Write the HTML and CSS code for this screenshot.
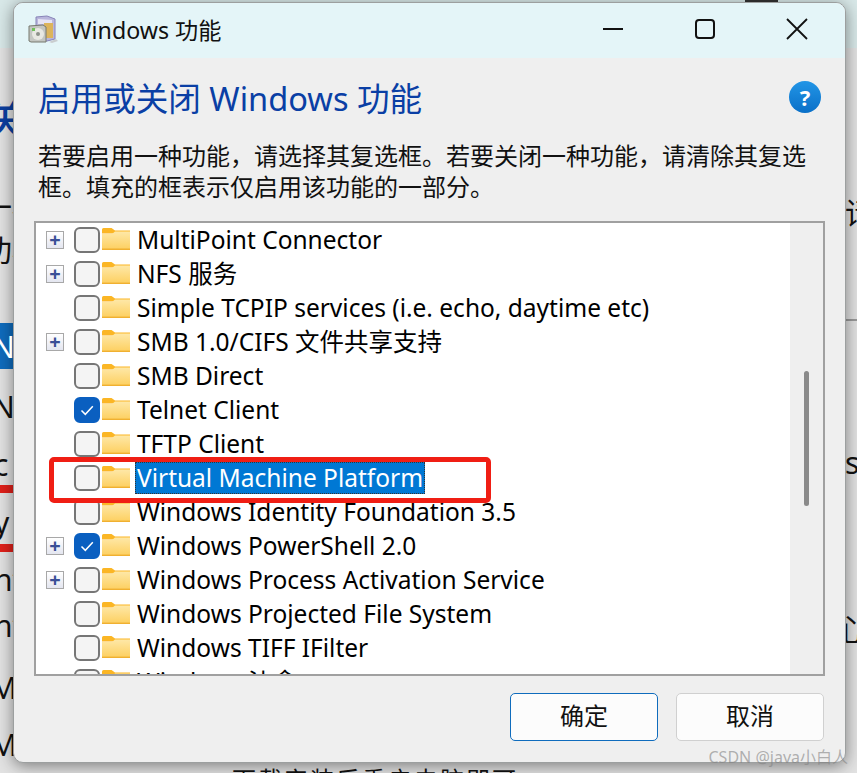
FILE: index.html
```html
<!DOCTYPE html>
<html lang="zh-CN">
<head>
  <meta charset="UTF-8">
  <title>Windows 功能</title>
  <link rel="stylesheet" href="styles.css">
</head>
<body>
  <svg class="defs" width="0" height="0">
    <linearGradient id="folderfill" x1="0" y1="0" x2="0" y2="1">
      <stop offset="0" stop-color="#fee8a8"/>
      <stop offset="1" stop-color="#fdcf5e"/>
    </linearGradient>
    <symbol id="folder" viewBox="0 0 28 22">
      <path d="M0 1.5A1.5 1.5 0 0 1 1.5 0h8l3.500 2.500h15v3H0z" fill="#fbb625"/>
      <path d="M0 6h10l3-2.500h15V21a1 1 0 0 1-1 1H1a1 1 0 0 1-1-1z" fill="url(#folderfill)"/>
      <path d="M0 21.300h28" stroke="#f0b030" stroke-width="1.400"/>
    </symbol>
    <symbol id="tick" viewBox="0 0 26 26">
      <path d="M7.500 13.500l3.800 3.800 7.500-8" fill="none" stroke="#fff" stroke-width="1.500"/>
    </symbol>
  </svg>

  <!-- page behind the dialog -->
  <div class="behind">
    <span class="frag frag-guan">关</span>
    <span class="frag frag-a">一桥</span>
    <span class="frag frag-b">功析</span>
    <span class="frag frag-n">N</span>
    <span class="frag frag-n2">N</span>
    <span class="frag frag-c">c</span>
    <span class="frag frag-y">y</span>
    <span class="frag frag-i1">nt</span>
    <span class="frag frag-i2">nt</span>
    <span class="frag frag-m1">Mi</span>
    <span class="frag frag-m2">Mi</span>
    <span class="frag frag-r1">请</span>
    <span class="frag frag-r2">s</span>
    <span class="frag frag-r3">心</span>
    <span class="frag frag-bottom">下载安装后重启电脑即可</span>
    <i class="redline redline-1"></i>
    <i class="redline redline-2"></i>
    <i class="hilite"></i>
    <i class="rule"></i>
    <i class="topblock"></i>
  </div>

  <div class="window">
    <div class="titlebar">
      <svg class="appicon" width="30" height="30" viewBox="0 0 30 30">
        <path d="M8 3l11-1 8 3v20l-8 2H8z" fill="#b9b6dc" stroke="#8884b8"/>
        <path d="M10 5l14 1v4H10z" fill="#e6e4f4"/>
        <path d="M16 9h9v15h-9z" fill="#dcb45c"/>
        <path d="M1 12l14-1 3 2v15H3l-2-1z" fill="#c4c6c2" stroke="#77796f"/>
        <circle cx="10" cy="20" r="6" fill="#e8e8e2"/>
        <circle cx="10" cy="20" r="2" fill="#8d918a"/>
        <path d="M4 14h3v3H4z" fill="#6fc25a"/>
        <path d="M21 28l7-3 2 2-6 2z" fill="#c9cdcf"/>
      </svg>
      <span class="title">Windows 功能</span>
      <div class="winbtns">
        <svg width="22" height="22" viewBox="0 0 22 22"><path d="M1 11h20" stroke="#111" stroke-width="2"/></svg>
        <svg width="22" height="22" viewBox="0 0 22 22"><rect x="2" y="2" width="18" height="18" rx="3" fill="none" stroke="#111" stroke-width="2"/></svg>
        <svg width="22" height="22" viewBox="0 0 22 22"><path d="M1 1l20 20M21 1L1 21" stroke="#111" stroke-width="1.800"/></svg>
      </div>
    </div>

    <div class="content">
      <div class="heading">
        <h1>启用或关闭 Windows 功能</h1>
        <span class="help">?</span>
      </div>
      <p class="intro">若要启用一种功能，请选择其复选框。若要关闭一种功能，请清除其复选框。填充的框表示仅启用该功能的一部分。</p>

      <div class="listbox">
        <div class="rows">
          <div class="row"><span class="expander">+</span><span class="check"></span><svg class="folder"><use href="#folder"/></svg><span class="label">MultiPoint Connector</span></div>
          <div class="row"><span class="expander">+</span><span class="check"></span><svg class="folder"><use href="#folder"/></svg><span class="label">NFS 服务</span></div>
          <div class="row"><span class="expander blank"></span><span class="check"></span><svg class="folder"><use href="#folder"/></svg><span class="label">Simple TCPIP services (i.e. echo, daytime etc)</span></div>
          <div class="row"><span class="expander">+</span><span class="check"></span><svg class="folder"><use href="#folder"/></svg><span class="label">SMB 1.0/CIFS 文件共享支持</span></div>
          <div class="row"><span class="expander blank"></span><span class="check"></span><svg class="folder"><use href="#folder"/></svg><span class="label">SMB Direct</span></div>
          <div class="row"><span class="expander blank"></span><span class="check on"><svg><use href="#tick"/></svg></span><svg class="folder"><use href="#folder"/></svg><span class="label">Telnet Client</span></div>
          <div class="row"><span class="expander blank"></span><span class="check"></span><svg class="folder"><use href="#folder"/></svg><span class="label">TFTP Client</span></div>
          <div class="row"><span class="expander blank"></span><span class="check"></span><svg class="folder"><use href="#folder"/></svg><span class="label selected">Virtual Machine Platform</span></div>
          <div class="row"><span class="expander blank"></span><span class="check"></span><svg class="folder"><use href="#folder"/></svg><span class="label">Windows Identity Foundation 3.5</span></div>
          <div class="row"><span class="expander">+</span><span class="check on"><svg><use href="#tick"/></svg></span><svg class="folder"><use href="#folder"/></svg><span class="label">Windows PowerShell 2.0</span></div>
          <div class="row"><span class="expander">+</span><span class="check"></span><svg class="folder"><use href="#folder"/></svg><span class="label">Windows Process Activation Service</span></div>
          <div class="row"><span class="expander blank"></span><span class="check"></span><svg class="folder"><use href="#folder"/></svg><span class="label">Windows Projected File System</span></div>
          <div class="row"><span class="expander blank"></span><span class="check"></span><svg class="folder"><use href="#folder"/></svg><span class="label">Windows TIFF IFilter</span></div>
          <div class="row"><span class="expander blank"></span><span class="check"></span><svg class="folder"><use href="#folder"/></svg><span class="label">Windows 沙盒</span></div>
        </div>
        <div class="scrollbar"><div class="thumb"></div></div>
      </div>

      <div class="buttons">
        <button class="btn primary">确定</button>
        <button class="btn">取消</button>
      </div>
    </div>

    <div class="marker"></div>
  </div>

  <div class="watermark">CSDN @java小白人</div>
</body>
</html>
```

FILE: styles.css
```css
html, body {
  margin: 0;
  padding: 0;
}
body {
  position: relative;
  width: 857px;
  height: 773px;
  overflow: hidden;
  background: #d6d6d6;
  font-family: "Noto Sans", "Noto Sans CJK SC", sans-serif;
}
.defs {
  position: absolute;
}

/* page behind the dialog */
.behind {
  position: absolute;
  inset: 0;
  background: linear-gradient(#d8e8e8 0, #d8e8e8 48px, #e2e2e2 48px, #e2e2e2 100%);
}
.frag {
  position: absolute;
  font-size: 30px;
  line-height: 34px;
  color: #111;
}
.frag-guan { left: -18px; top: 94px; font-size: 46px; line-height: 46px; color: #0b3fa0; }
.frag-a { left: -18px; top: 190px; }
.frag-b { left: -18px; top: 233px; }
.frag-n { left: -8px; top: 330px; color: #fff; z-index: 1; }
.frag-n2 { left: -8px; top: 390px; }
.frag-c { left: -6px; top: 448px; }
.frag-y { left: -6px; top: 506px; }
.frag-i1 { left: -6px; top: 563px; }
.frag-i2 { left: -6px; top: 609px; }
.frag-m1 { left: -10px; top: 671px; }
.frag-m2 { left: -10px; top: 728px; }
.frag-r1 { left: 845px; top: 196px; }
.frag-r2 { left: 845px; top: 446px; }
.frag-r3 { left: 836px; top: 612px; }
.frag-bottom { left: 232px; top: 763px; letter-spacing: 2px; font-size: 24px; }
.redline {
  position: absolute;
  left: 0;
  width: 14px;
  height: 8px;
  background: #e0201a;
}
.redline-1 { top: 485px; }
.redline-2 { top: 544px; }
.hilite {
  position: absolute;
  left: 0;
  top: 323px;
  width: 14px;
  height: 46px;
  background: #0f6cbd;
}
.rule {
  position: absolute;
  left: 846px;
  top: 319px;
  width: 11px;
  height: 2px;
  background: #9a9a9a;
}
.topblock {
  position: absolute;
  left: 745px;
  top: 0;
  width: 33px;
  height: 3px;
  background: #333;
}

/* dialog */
.window {
  position: absolute;
  left: 13px;
  top: 2px;
  width: 833px;
  height: 761px;
  box-sizing: border-box;
  border: 1px solid #9c9f9f;
  border-radius: 10px;
  background: #efefef;
  overflow: hidden;
  box-shadow: 0 3px 16px rgba(0, 0, 0, 0.45);
  display: flex;
  flex-direction: column;
}
.titlebar {
  height: 55px;
  box-sizing: border-box;
  flex: none;
  display: flex;
  align-items: center;
  background: #e4f5f8;
  padding: 0 0 3px 14px;
}
.appicon {
  margin-right: 12px;
}
.title {
  font-size: 23.2px;
  color: #111;
}
.winbtns {
  margin-left: auto;
  display: flex;
  gap: 70px;
  padding-right: 37px;
}
.content {
  flex: 1;
  display: flex;
  flex-direction: column;
  padding: 0 20px;
}
.heading {
  display: flex;
  justify-content: space-between;
  align-items: center;
  padding: 17px 4px 0 4px;
  height: 44px;
}
h1 {
  margin: 0;
  font-size: 32.6px;
  font-weight: 400;
  color: #0a3fa5;
  white-space: nowrap;
}
.help {
  width: 32px;
  height: 32px;
  border-radius: 50%;
  background: linear-gradient(#2295e6, #0a70c8);
  color: #fff;
  font-size: 22px;
  font-weight: 700;
  text-align: center;
  line-height: 32px;
}
.intro {
  margin: 21px 0 0 4px;
  width: 775px;
  font-size: 24px;
  line-height: 31px;
  color: #111;
}
.listbox {
  margin-top: 19px;
  width: 791px;
  height: 455px;
  box-sizing: border-box;
  border: 2px solid #a0a0a0;
  background: #fff;
  display: flex;
  overflow: hidden;
}
.rows {
  flex: 1;
}
.row {
  height: 34px;
  display: flex;
  align-items: center;
  padding-left: 10px;
}
.expander {
  width: 18px;
  height: 18px;
  box-sizing: border-box;
  border: 1px solid #a8a8a8;
  background: linear-gradient(#fff, #e4e6f0);
  color: #3a4f96;
  font-size: 20px;
  font-weight: 700;
  line-height: 15px;
  text-align: center;
  margin-right: 10px;
  flex: none;
}
.expander.blank {
  visibility: hidden;
}
.check {
  width: 26px;
  height: 26px;
  box-sizing: border-box;
  border: 2px solid #767676;
  border-radius: 6px;
  background: #f4f4f4;
  flex: none;
}
.check.on {
  background: #0a5fc0;
  border-color: #0a5fc0;
}
.check svg {
  display: block;
  width: 26px;
  height: 26px;
  margin: -2px;
}
.folder {
  width: 28px;
  height: 22px;
  margin: -2px 5px 0 2px;
  flex: none;
}
.label {
  font-size: 24.5px;
  line-height: 32px;
  padding: 0 2px;
  color: #000;
  white-space: nowrap;
}
.label.selected {
  background: #0078d4;
  color: #fff;
  outline: 1px dotted #333;
  outline-offset: -1px;
}
.scrollbar {
  width: 33px;
  flex: none;
  background: #efefef;
  box-sizing: border-box;
  padding: 148px 0 0 14px;
}
.thumb {
  width: 5px;
  height: 135px;
  border-radius: 3px;
  background: #8a8a8a;
}
.buttons {
  display: flex;
  justify-content: flex-end;
  gap: 18px;
  margin-top: 17px;
  padding-right: 1px;
}
.btn {
  width: 148px;
  height: 48px;
  border: 1px solid #d0d0d0;
  border-radius: 5px;
  background: #fcfcfc;
  font-family: "Noto Sans", "Noto Sans CJK SC", sans-serif;
  font-size: 24px;
  line-height: 44px;
  color: #111;
  padding: 0 0 2px;
}
.btn.primary {
  border-color: #0f6cbd;
}

/* annotation over the list */
.marker {
  position: absolute;
  left: 35px;
  top: 454px;
  width: 442px;
  height: 46px;
  box-sizing: border-box;
  border: 5px solid #f01e14;
  border-radius: 5px;
}
.watermark {
  position: absolute;
  right: 9px;
  bottom: 5px;
  font-size: 16px;
  color: rgba(130, 130, 130, 0.6);
  white-space: nowrap;
}
```
